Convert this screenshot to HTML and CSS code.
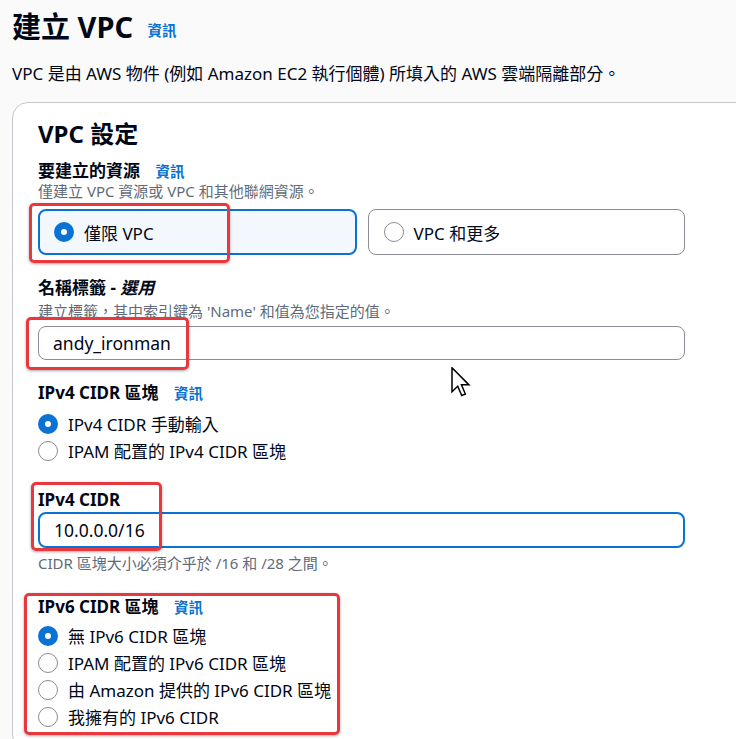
FILE: index.html
```html
<!DOCTYPE html>
<html lang="zh-Hant">
<head>
  <meta charset="UTF-8">
  <title>建立 VPC</title>
  <link rel="stylesheet" href="styles.css">
</head>
<body>
  <div class="page">
    <h1 class="page-title">建立 VPC <a class="info-link">資訊</a></h1>
    <p class="page-desc">VPC 是由 AWS 物件 (例如 Amazon EC2 執行個體) 所填入的 AWS 雲端隔離部分。</p>

    <div class="card">
      <h2 class="card-title">VPC 設定</h2>

      <div class="field first">
        <div class="field-label">要建立的資源 <a class="info-link">資訊</a></div>
        <div class="field-help">僅建立 VPC 資源或 VPC 和其他聯網資源。</div>
        <div class="tiles">
          <div class="tile selected">
            <span class="radio checked"></span>
            <span>僅限 VPC</span>
          </div>
          <div class="tile">
            <span class="radio"></span>
            <span>VPC 和更多</span>
          </div>
        </div>
      </div>

      <div class="field">
        <div class="field-label">名稱標籤 - <em>選用</em></div>
        <div class="field-help help-tag">建立標籤，其中索引鍵為 'Name' 和值為您指定的值。</div>
        <div class="text-input">andy_ironman</div>
      </div>

      <div class="field">
        <div class="field-label">IPv4 CIDR 區塊 <a class="info-link">資訊</a></div>
        <div class="radio-group">
          <div class="radio-row"><span class="radio checked"></span>IPv4 CIDR 手動輸入</div>
          <div class="radio-row"><span class="radio"></span>IPAM 配置的 IPv4 CIDR 區塊</div>
        </div>
      </div>

      <div class="field cidr">
        <div class="field-label">IPv4 CIDR</div>
        <div class="text-input focused">10.0.0.0/16</div>
        <div class="field-help help-after">CIDR 區塊大小必須介乎於 /16 和 /28 之間。</div>
      </div>

      <div class="field last">
        <div class="field-label">IPv6 CIDR 區塊 <a class="info-link">資訊</a></div>
        <div class="radio-group">
          <div class="radio-row"><span class="radio checked"></span>無 IPv6 CIDR 區塊</div>
          <div class="radio-row"><span class="radio"></span>IPAM 配置的 IPv6 CIDR 區塊</div>
          <div class="radio-row"><span class="radio"></span>由 Amazon 提供的 IPv6 CIDR 區塊</div>
          <div class="radio-row"><span class="radio"></span>我擁有的 IPv6 CIDR</div>
        </div>
      </div>
    </div>

    <!-- 標註用的紅框 -->
    <div class="mark mark-1"></div>
    <div class="mark mark-2"></div>
    <div class="mark mark-3"></div>
    <div class="mark mark-4"></div>

    <svg class="cursor" width="20" height="30" viewBox="0 0 13 20">
      <path d="M0.5 0.5 L0.5 16.5 L4.3 12.8 L7 19 L9.4 18 L6.8 11.9 L11.8 11.9 Z" fill="#fff" stroke="#000" stroke-width="1" stroke-linejoin="miter"/>
    </svg>
  </div>
</body>
</html>
```

FILE: styles.css
```css
body {
  margin: 0;
  background: #fafafa;
  color: #000716;
  font-family: "Noto Sans", "Noto Sans CJK TC", sans-serif;
  overflow: hidden;
}

.page {
  position: relative;
  width: 736px;
  height: 739px;
  overflow: hidden;
}

.info-link {
  color: #0972d3;
  font-size: 14.5px;
  font-weight: bold;
  margin-left: 8px;
}

.page-title {
  margin: 0;
  padding: 9px 0 0 12px;
  font-size: 29px;
  line-height: 36px;
  font-weight: bold;
}

.page-title .info-link {
  margin-left: 7px;
  vertical-align: 2px;
}

.page-desc {
  margin: 0;
  padding: 14px 0 0 12px;
  font-size: 17px;
  line-height: 24px;
}

.card {
  margin: 16px 0 0 12px;
  width: 800px;
  padding: 15px 25px 20px;
  background: #fff;
  border: 1px solid #c6c6cd;
  border-radius: 16px;
}

.card-title {
  margin: 0;
  font-size: 24px;
  line-height: 32px;
  font-weight: bold;
}

.field {
  width: 647px;
  margin-top: 23px;
}

.field.first {
  margin-top: 11px;
}

.field.cidr {
  margin-top: 26px;
}

.field.last {
  margin-top: 24px;
}

.field-label {
  font-size: 17px;
  line-height: 20px;
  font-weight: bold;
}

.field-label .info-link {
  margin-left: 11px;
}

.field-label em {
  font-style: italic;
}

.field-help {
  font-size: 15px;
  line-height: 20px;
  color: #5f6b7a;
}

.help-tag {
  margin-top: 3px;
}

.help-after {
  margin-top: 5px;
}

.tiles {
  display: flex;
  gap: 11px;
  margin-top: 8px;
}

.tile {
  flex: 1;
  height: 46px;
  box-sizing: border-box;
  display: flex;
  align-items: center;
  gap: 10px;
  padding-left: 14px;
  border: 1px solid #8c8c94;
  border-radius: 8px;
  font-size: 17px;
}

.tile.selected {
  border: 2px solid #0972d3;
  background: #f2f8fd;
}

.tile:not(.selected) {
  padding-left: 15px;
}

.radio {
  width: 20px;
  height: 20px;
  box-sizing: border-box;
  border: 1.5px solid #8c8c94;
  border-radius: 50%;
  background: #fff;
  flex-shrink: 0;
}

.radio.checked {
  border: 7px solid #0972d3;
}

.text-input {
  margin-top: 5px;
  height: 34px;
  box-sizing: border-box;
  display: flex;
  align-items: center;
  padding-left: 14px;
  border: 1px solid #8c8c94;
  border-radius: 8px;
  font-size: 17.5px;
}

.text-input.focused {
  margin-top: 2px;
  height: 36px;
  padding-left: 14px;
  border: 2px solid #0972d3;
}

.radio-group {
  margin-top: 7px;
}

.field.last .radio-group {
  margin-top: 5px;
}

.radio-row {
  display: flex;
  align-items: center;
  gap: 10px;
  height: 27px;
  font-size: 17px;
}

.mark {
  position: absolute;
  border: 3px solid #e8383d;
  border-radius: 5px;
  box-shadow: 0 1px 3px rgba(0, 0, 0, 0.35);
}

.mark-1 { left: 29px; top: 203px; width: 195px; height: 54px; }
.mark-2 { left: 26px; top: 317px; width: 157px; height: 47px; }
.mark-3 { left: 31px; top: 482px; width: 125px; height: 63px; }
.mark-4 { left: 24px; top: 593px; width: 310px; height: 136px; }

.cursor {
  position: absolute;
  left: 451px;
  top: 367px;
}
```
